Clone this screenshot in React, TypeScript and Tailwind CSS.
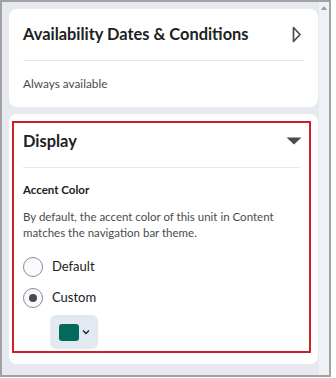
import { useState } from 'react'

const font = { fontFamily: 'Lato, "Noto Sans", sans-serif' }

function Radio({ checked, label, onClick }: { checked: boolean; label: string; onClick: () => void }) {
  return (
    <button type="button" onClick={onClick} className="flex items-center gap-[9px] h-[22px]">
      <span className="w-[20px] h-[20px] rounded-full border border-[#868c8f] bg-[#f9fbff] flex items-center justify-center">
        {checked && <span className="w-[8px] h-[8px] rounded-full bg-[#494c4e]" />}
      </span>
      <span className="text-[13px] text-[#202122]">{label}</span>
    </button>
  )
}

export default function App() {
  const [accent, setAccent] = useState('custom')

  return (
    <div className="w-[336px] h-[378px] bg-white" style={font}>
      <div className="w-[331px] h-[377px] border-2 border-[#a2a2a2] bg-[#e6eaf0] flex">
        <div className="flex-1 pl-[7px] pt-[7px] flex flex-col gap-[7px]">
          {/* availability card */}
          <div className="w-[309px] bg-white rounded-lg px-[14px]">
            <div className="h-[52px] flex items-center justify-between border-b border-[#e3e9f1]">
              <h2 className="text-[16.4px] font-bold text-[#202122]">Availability Dates &amp; Conditions</h2>
              <svg width="10" height="17" viewBox="0 0 10 17" className="mr-[2px]">
                <path d="M1.5 1.5 L8 8.5 L1.5 15.5 Z" fill="none" stroke="#494c4e" strokeWidth="1.7" strokeLinejoin="round" />
              </svg>
            </div>
            <div className="h-[46px] flex items-center text-[11.8px] text-[#494c4e]">Always available</div>
          </div>

          {/* display card */}
          <div className="w-[309px] h-[250px] bg-white rounded-lg pt-[7px] pl-[3px] pr-[7px]">
            <div className="h-[232px] border-2 border-[#cd2026] px-[9px]">
              <div className="h-[36px] flex items-center justify-between">
                <h2 className="text-[16.4px] font-bold text-[#202122]">Display</h2>
                <svg width="16" height="8" viewBox="0 0 16 8" className="mr-[-2px]">
                  <path d="M0.5 0.5 L15.5 0.5 L8 7.5 Z" fill="#494c4e" />
                </svg>
              </div>
              <div className="mt-[8px] border-t border-[#e3e9f1]" />
              <div className="mt-[13px] text-[11.5px] leading-[18px] font-bold text-[#202122]">Accent Color</div>
              <p className="mt-[10px] text-[11.5px] leading-[16px] text-[#494c4e]">
                By default, the accent color of this unit in Content matches the navigation bar theme.
              </p>
              <div className="mt-[15px] flex flex-col gap-[9px]">
                <Radio checked={accent === 'default'} label="Default" onClick={() => setAccent('default')} />
                <Radio checked={accent === 'custom'} label="Custom" onClick={() => setAccent('custom')} />
              </div>
              <button
                type="button"
                className="mt-[6px] ml-[27px] w-[48px] h-[34px] rounded-md bg-[#e3e9f1] flex items-center pl-[9px] gap-[3px]"
              >
                <span className="w-[20px] h-[17px] rounded-[3px] bg-[#04695d]" />
                <svg width="8" height="6" viewBox="0 0 8 6">
                  <path d="M1 1.5 L4 4.5 L7 1.5" fill="none" stroke="#202122" strokeWidth="1.3" />
                </svg>
              </button>
            </div>
          </div>
        </div>

        {/* scrollbar */}
        <div className="w-[10px] bg-[#eef1f5] flex justify-center pt-[4px]">
          <svg width="6" height="4" viewBox="0 0 6 4">
            <path d="M0 4 L3 0 L6 4 Z" fill="#9a9ea3" />
          </svg>
        </div>
      </div>
    </div>
  )
}
